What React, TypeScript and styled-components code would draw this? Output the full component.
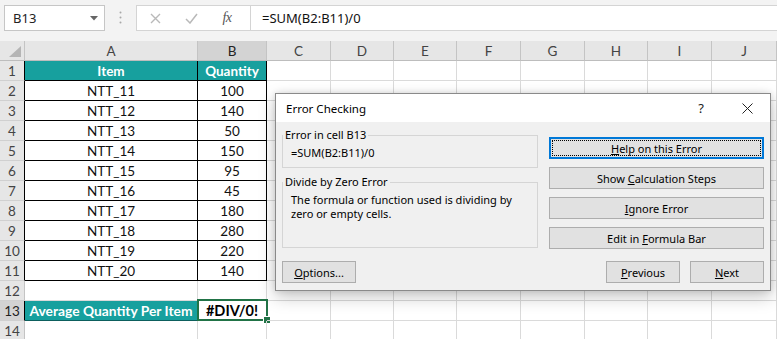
import React from "react";
import styled, { createGlobalStyle, css } from "styled-components";

const GlobalStyle = createGlobalStyle`
  html, body { margin: 0; padding: 0; background: #ffffff; overflow: hidden; }
  * { box-sizing: border-box; }
`;

const TEAL = "#17a09e";
const GREEN = "#217346";

const Page = styled.div`
  position: relative;
  width: 777px;
  height: 339px;
  overflow: hidden;
  font-family: Lato, "Liberation Sans", sans-serif;
  background: #ffffff;
`;

/* ---------- formula bar ---------- */
const FormulaBar = styled.div`
  display: flex;
  align-items: flex-start;
  height: 41px;
  padding: 5px 0 0 4px;
  background: #f3f3f3;
`;

const NameBox = styled.div`
  display: flex;
  align-items: center;
  justify-content: space-between;
  width: 101px;
  height: 26px;
  padding: 0 6px 0 8px;
  background: #ffffff;
  border: 1px solid #c6c6c6;
  font-family: "Noto Sans", sans-serif;
  font-size: 13px;
  color: #222;
`;

const Grip = styled.div`
  display: flex;
  justify-content: center;
  width: 31px;
  padding-top: 6px;
`;

const FxBox = styled.div`
  display: flex;
  align-items: center;
  width: 114px;
  height: 26px;
  background: #ffffff;
  border: 1px solid #d4d4d4;
  border-right: none;
`;

const FxSlot = styled.span`
  display: flex;
  align-items: center;
  justify-content: center;
  width: 36px;
  height: 100%;
`;

const FxText = styled.span`
  font-family: "Liberation Serif", serif;
  font-style: italic;
  font-size: 14px;
  color: #555;
  letter-spacing: -0.5px;
`;

const FormulaInput = styled.div`
  flex: 1;
  height: 26px;
  display: flex;
  align-items: center;
  padding-left: 11px;
  background: #ffffff;
  border: 1px solid #d4d4d4;
  border-right: none;
  font-family: "Noto Sans", sans-serif;
  font-size: 13px;
  color: #111;
`;

/* ---------- sheet ---------- */
const Sheet = styled.div`
  display: grid;
  grid-template-columns: 25px 173px 69px 64px 63px 63px 64px 64px 63px 64px 1fr;
  grid-auto-rows: 20px;
`;

const HeadBase = css`
  display: flex;
  align-items: center;
  justify-content: center;
  background: #e6e6e6;
  color: #444;
  font-size: 13.5px;
  border-right: 1px solid #c4c4c4;
  border-bottom: 1px solid #bdbdbd;
`;

const Corner = styled.div`
  ${HeadBase};
  align-items: flex-end;
  justify-content: flex-end;
  padding: 0 3px 3px 0;
`;

const ColHead = styled.div<{ $selected?: boolean }>`
  ${HeadBase};
  ${(p) =>
    p.$selected &&
    css`
      background: #d3d3d3;
      color: #222;
    `}
`;

const RowHead = styled.div<{ $selected?: boolean; $edge?: boolean }>`
  ${HeadBase};
  border-bottom-color: #d0d0d0;
  ${(p) =>
    p.$edge &&
    css`
      border-right-color: #000;
    `}
  ${(p) =>
    p.$selected &&
    css`
      background: #d3d3d3;
      color: #222;
    `}
`;

type Tone = "plain" | "table" | "head" | "sum" | "result";

const Cell = styled.div<{ $tone?: Tone }>`
  position: relative;
  display: flex;
  align-items: center;
  justify-content: center;
  white-space: nowrap;
  font-size: 13.5px;
  color: #111;
  border-right: 1px solid #dadada;
  border-bottom: 1px solid #dadada;
  ${(p) =>
    p.$tone === "table" &&
    css`
      border-color: #000;
    `}
  ${(p) =>
    p.$tone === "head" &&
    css`
      background: ${TEAL};
      color: #ffffff;
      font-weight: 700;
      border-color: #000;
    `}
  ${(p) =>
    p.$tone === "sum" &&
    css`
      background: ${TEAL};
      color: #ffffff;
      font-weight: 700;
      font-size: 13.8px;
      border-color: #0d5f5d;
    `}
  ${(p) =>
    p.$tone === "result" &&
    css`
      font-weight: 700;
      font-size: 14.5px;
      color: #000;
    `}
`;

const Selection = styled.div`
  position: absolute;
  top: -2px;
  left: -1px;
  right: -2px;
  bottom: -1px;
  border: 2px solid ${GREEN};
  pointer-events: none;
`;

const FillHandle = styled.div`
  position: absolute;
  right: -4px;
  bottom: -4px;
  width: 6px;
  height: 6px;
  background: ${GREEN};
  box-shadow: 0 0 0 1px #ffffff;
`;

/* ---------- dialog ---------- */
const Dialog = styled.div`
  position: absolute;
  left: 275px;
  top: 93px;
  width: 496px;
  height: 198px;
  display: flex;
  flex-direction: column;
  background: #f0f0f0;
  border: 1px solid #8a8a8a;
  box-shadow: 0 6px 16px rgba(0, 0, 0, 0.22), 0 0 6px rgba(0, 0, 0, 0.12);
  font-family: "Noto Sans", sans-serif;
  font-size: 11px;
  color: #000;
`;

const TitleBar = styled.div`
  display: flex;
  align-items: center;
  justify-content: space-between;
  height: 28px;
  padding-left: 10px;
  background: #ffffff;
`;

const TitleText = styled.span`
  font-size: 11.5px;
  color: #000;
`;

const TitleButtons = styled.div`
  display: flex;
  height: 100%;
`;

const TitleButton = styled.span`
  display: flex;
  align-items: center;
  justify-content: center;
  width: 46px;
  height: 100%;
  font-size: 13px;
  color: #222;
`;

const DialogBody = styled.div`
  flex: 1;
  display: flex;
  flex-direction: column;
  padding: 5px 6px 7px 6px;
`;

const Main = styled.div`
  display: flex;
  justify-content: space-between;
`;

const LeftCol = styled.div`
  display: flex;
  flex-direction: column;
  gap: 6px;
  width: 256px;
`;

const RightCol = styled.div`
  display: flex;
  flex-direction: column;
  gap: 8px;
  width: 215px;
  padding-top: 10px;
`;

const Group = styled.fieldset<{ $height: number }>`
  margin: 0;
  padding: 0;
  height: ${(p) => p.$height}px;
  border: 1px solid #d5d5d5;
  min-width: 0;
`;

const Legend = styled.legend`
  margin: 0;
  padding: 0 2px;
  line-height: 16px;
  font-size: 11px;
`;

const GroupText = styled.div<{ $indent: number }>`
  padding: 3px 0 0 ${(p) => p.$indent}px;
  line-height: 14px;
  font-size: 11px;
`;

const Button = styled.div<{ $focused?: boolean; $width?: number }>`
  display: flex;
  align-items: center;
  justify-content: center;
  width: ${(p) => (p.$width ? `${p.$width}px` : "100%")};
  height: 22px;
  background: #e1e1e1;
  border: 1px solid #adadad;
  font-size: 11px;
  color: #000;
  ${(p) =>
    p.$focused &&
    css`
      border-color: #0078d7;
      box-shadow: inset 0 0 0 1px #0078d7;
      outline: 1px dotted #000;
      outline-offset: -4px;
    `}
`;

const Key = styled.span`
  text-decoration: underline;
  text-underline-offset: 1px;
`;

const Footer = styled.div`
  display: flex;
  align-items: center;
  margin-top: auto;
  gap: 10px;
`;

const Spacer = styled.div`
  flex: 1;
`;

/* ---------- data ---------- */
const COLS = ["A", "B", "C", "D", "E", "F", "G", "H", "I", "J"];
const DATA: [string, number][] = [
  ["NTT_11", 100],
  ["NTT_12", 140],
  ["NTT_13", 50],
  ["NTT_14", 150],
  ["NTT_15", 95],
  ["NTT_16", 45],
  ["NTT_17", 180],
  ["NTT_18", 280],
  ["NTT_19", 220],
  ["NTT_20", 140],
];

type RowSpec = { a: React.ReactNode; b: React.ReactNode; ta: Tone; tb: Tone };

function rowSpec(n: number): RowSpec {
  if (n === 1) return { a: "Item", b: "Quantity", ta: "head", tb: "head" };
  if (n >= 2 && n <= 11) {
    const [a, b] = DATA[n - 2];
    return { a, b, ta: "table", tb: "table" };
  }
  if (n === 13) return { a: "Average Quantity Per Item", b: "#DIV/0!", ta: "sum", tb: "result" };
  return { a: "", b: "", ta: "plain", tb: "plain" };
}

const Caret = () => (
  <svg width="8" height="5" viewBox="0 0 8 5">
    <path d="M0 0 L8 0 L4 4.5 Z" fill="#666" />
  </svg>
);

const GripDots = () => (
  <svg width="3" height="13" viewBox="0 0 3 13">
    <circle cx="1.5" cy="1.5" r="1" fill="#a8a8a8" />
    <circle cx="1.5" cy="6.5" r="1" fill="#a8a8a8" />
    <circle cx="1.5" cy="11.5" r="1" fill="#a8a8a8" />
  </svg>
);

const CancelIcon = () => (
  <svg width="11" height="11" viewBox="0 0 11 11">
    <path d="M1 1 L10 10 M10 1 L1 10" stroke="#b9b9b9" strokeWidth="1.4" />
  </svg>
);

const EnterIcon = () => (
  <svg width="13" height="11" viewBox="0 0 13 11">
    <path d="M1 6 L5 10 L12 1" stroke="#b9b9b9" strokeWidth="1.5" fill="none" />
  </svg>
);

const CloseIcon = () => (
  <svg width="11" height="11" viewBox="0 0 11 11">
    <path d="M0.5 0.5 L10.5 10.5 M10.5 0.5 L0.5 10.5" stroke="#222" strokeWidth="1" />
  </svg>
);

const CornerMark = () => (
  <svg width="12" height="11" viewBox="0 0 12 11">
    <path d="M12 0 L12 11 L0 11 Z" fill="#b5b5b5" />
  </svg>
);

export default function App() {
  const rows = Array.from({ length: 14 }, (_, i) => i + 1);
  return (
    <Page>
      <GlobalStyle />
      <FormulaBar>
        <NameBox>
          <span>B13</span>
          <Caret />
        </NameBox>
        <Grip>
          <GripDots />
        </Grip>
        <FxBox>
          <FxSlot>
            <CancelIcon />
          </FxSlot>
          <FxSlot>
            <EnterIcon />
          </FxSlot>
          <FxSlot>
            <FxText>fx</FxText>
          </FxSlot>
        </FxBox>
        <FormulaInput>=SUM(B2:B11)/0</FormulaInput>
      </FormulaBar>

      <Sheet>
        <Corner>
          <CornerMark />
        </Corner>
        {COLS.map((c) => (
          <ColHead key={c} $selected={c === "B"}>
            {c}
          </ColHead>
        ))}
        {rows.map((n) => {
          const s = rowSpec(n);
          return (
            <React.Fragment key={n}>
              <RowHead $selected={n === 13} $edge={n <= 11 || n === 13}>
                {n}
              </RowHead>
              <Cell $tone={s.ta}>{s.a}</Cell>
              <Cell $tone={s.tb}>
                {s.b}
                {n === 13 && (
                  <Selection>
                    <FillHandle />
                  </Selection>
                )}
              </Cell>
              {COLS.slice(2).map((c) => (
                <Cell key={c} $tone="plain" />
              ))}
            </React.Fragment>
          );
        })}
      </Sheet>

      <Dialog>
        <TitleBar>
          <TitleText>Error Checking</TitleText>
          <TitleButtons>
            <TitleButton>?</TitleButton>
            <TitleButton>
              <CloseIcon />
            </TitleButton>
          </TitleButtons>
        </TitleBar>
        <DialogBody>
          <Main>
            <LeftCol>
              <Group $height={41}>
                <Legend>Error in cell B13</Legend>
                <GroupText $indent={8}>=SUM(B2:B11)/0</GroupText>
              </Group>
              <Group $height={74}>
                <Legend>Divide by Zero Error</Legend>
                <GroupText $indent={8}>
                  The formula or function used is dividing by
                  <br />
                  zero or empty cells.
                </GroupText>
              </Group>
            </LeftCol>
            <RightCol>
              <Button $focused>
                <span>
                  <Key>H</Key>elp on this Error
                </span>
              </Button>
              <Button>
                <span>
                  Show <Key>C</Key>alculation Steps
                </span>
              </Button>
              <Button>
                <span>
                  <Key>I</Key>gnore Error
                </span>
              </Button>
              <Button>
                <span>
                  Edit in <Key>F</Key>ormula Bar
                </span>
              </Button>
            </RightCol>
          </Main>
          <Footer>
            <Button $width={74}>
              <span>
                <Key>O</Key>ptions...
              </span>
            </Button>
            <Spacer />
            <Button $width={74}>
              <span>
                <Key>P</Key>revious
              </span>
            </Button>
            <Button $width={74}>
              <span>
                <Key>N</Key>ext
              </span>
            </Button>
          </Footer>
        </DialogBody>
      </Dialog>
    </Page>
  );
}
